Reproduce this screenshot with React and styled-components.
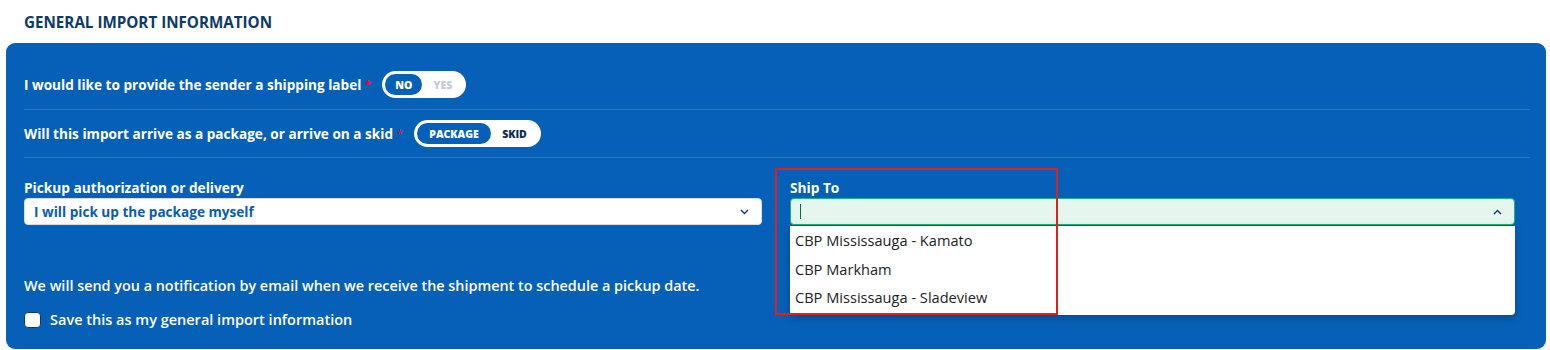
import React from 'react';
import styled, { createGlobalStyle } from 'styled-components';

const Global = createGlobalStyle`
  body {
    margin: 0;
    background: #ffffff;
    font-family: "Open Sans", "Liberation Sans", sans-serif;
  }
`;

const Page = styled.div`
  width: 1550px;
  height: 350px;
  overflow: hidden;
`;

const Title = styled.h2`
  margin: 0;
  padding: 12px 24px 0;
  height: 43px;
  box-sizing: border-box;
  font-size: 15.2px;
  line-height: 20px;
  font-weight: 700;
  color: #0c3a6b;
`;

const Panel = styled.div`
  margin-left: 6px;
  width: 1540px;
  box-sizing: border-box;
  background: #0760b8;
  border-radius: 9px;
  padding: 28px 16px 21px 18px;
  color: #ffffff;
`;

const Row = styled.div`
  display: flex;
  align-items: center;
  gap: 11px;
  padding: ${(p) => p.$pad};
  border-bottom: 1px solid #2b77c4;
`;

const Question = styled.span`
  font-size: 13.6px;
  font-weight: 700;
  line-height: 18px;
`;

const Star = styled.span`
  color: #e0153c;
  font-size: 11px;
  margin-left: 4px;
  vertical-align: 2px;
`;

const Toggle = styled.div`
  display: flex;
  align-items: center;
  background: #ffffff;
  border-radius: 14px;
  padding: 3px;
  height: 21px;
`;

const Opt = styled.span`
  height: 21px;
  width: ${(p) => p.$w}px;
  display: flex;
  align-items: center;
  justify-content: center;
  border-radius: 11px;
  font-size: 10.5px;
  font-weight: 800;
  background: ${(p) => (p.$on ? '#0760b8' : 'transparent')};
  color: ${(p) => (p.$on ? '#ffffff' : p.$dim ? '#c3ccd8' : '#0c2d5a')};
`;

const Fields = styled.div`
  display: grid;
  grid-template-columns: 738px 725px;
  gap: 28px;
  padding-top: 22px;
`;

const Field = styled.div`
  display: flex;
  flex-direction: column;
  gap: 2px;
  position: relative;
`;

const Label = styled.label`
  font-size: 13.7px;
  line-height: 16px;
  font-weight: 700;
`;

const SelectWrap = styled.div`
  position: relative;
`;

const Select = styled.div`
  height: 27px;
  box-sizing: border-box;
  border-radius: 4px;
  display: flex;
  align-items: center;
  justify-content: space-between;
  padding: 0 12px 0 9px;
  background: ${(p) => (p.$focus ? '#e5f6ef' : '#ffffff')};
  border: 1px solid ${(p) => (p.$focus ? '#1ab37a' : '#d8dee6')};
  color: #0a5cb0;
  font-size: 13.6px;
  font-weight: 700;
`;

const Caret = styled.span`
  width: 1px;
  height: 15px;
  background: #0c6b45;
`;

const Menu = styled.ul`
  position: absolute;
  top: 100%;
  left: 0;
  right: 0;
  margin: 1px 0 0;
  padding: 0 0 3px;
  list-style: none;
  background: #ffffff;
  border-radius: 0 0 4px 4px;
  box-shadow: 0 3px 8px rgba(0, 0, 0, 0.25);
`;

const Item = styled.li`
  height: 28.5px;
  display: flex;
  align-items: center;
  padding-left: 5px;
  font-size: 14.6px;
  color: #222222;
`;

const Highlight = styled.div`
  position: absolute;
  top: -12px;
  left: -15px;
  width: 283px;
  height: 147px;
  box-sizing: border-box;
  border: 2px solid #e0201e;
  pointer-events: none;
  z-index: 2;
`;

const Note = styled.p`
  margin: 52px 0 0;
  font-size: 14.4px;
  line-height: 18px;
  font-weight: 600;
`;

const Check = styled.label`
  display: flex;
  align-items: center;
  gap: 9px;
  margin-top: 17px;
  font-size: 14.5px;
  line-height: 16px;
  font-weight: 600;
`;

const Box = styled.span`
  width: 17px;
  height: 16px;
  border-radius: 4px;
  background: #ffffff;
  border: 1px solid #0b3a6e;
  box-sizing: border-box;
`;

const Chevron = ({ up }) => (
  <svg width="9" height="6" viewBox="0 0 9 6">
    <path
      d={up ? 'M1 5 L4.5 1.5 L8 5' : 'M1 1 L4.5 4.5 L8 1'}
      fill="none"
      stroke="#0c3a6b"
      strokeWidth="1.4"
    />
  </svg>
);

export default function App() {
  const places = ['CBP Mississauga - Kamato', 'CBP Markham', 'CBP Mississauga - Sladeview'];
  return (
    <Page>
      <Global />
      <Title>GENERAL IMPORT INFORMATION</Title>
      <Panel>
        <Row $pad="0 0 11px">
          <Question>
            I would like to provide the sender a shipping label<Star>*</Star>
          </Question>
          <Toggle>
            <Opt $on $w={37}>NO</Opt>
            <Opt $dim $w={41}>YES</Opt>
          </Toggle>
        </Row>
        <Row $pad="10px 0 10px">
          <Question>
            Will this import arrive as a package, or arrive on a skid<Star>*</Star>
          </Question>
          <Toggle>
            <Opt $on $w={74}>PACKAGE</Opt>
            <Opt $w={47}>SKID</Opt>
          </Toggle>
        </Row>
        <Fields>
          <Field>
            <Label>Pickup authorization or delivery</Label>
            <Select>
              I will pick up the package myself
              <Chevron />
            </Select>
          </Field>
          <Field>
            <Highlight />
            <Label>Ship To</Label>
            <SelectWrap>
              <Select $focus>
                <Caret />
                <Chevron up />
              </Select>
              <Menu>
                {places.map((p) => (
                  <Item key={p}>{p}</Item>
                ))}
              </Menu>
            </SelectWrap>
          </Field>
        </Fields>
        <Note>We will send you a notification by email when we receive the shipment to schedule a pickup date.</Note>
        <Check>
          <Box />
          Save this as my general import information
        </Check>
      </Panel>
    </Page>
  );
}
